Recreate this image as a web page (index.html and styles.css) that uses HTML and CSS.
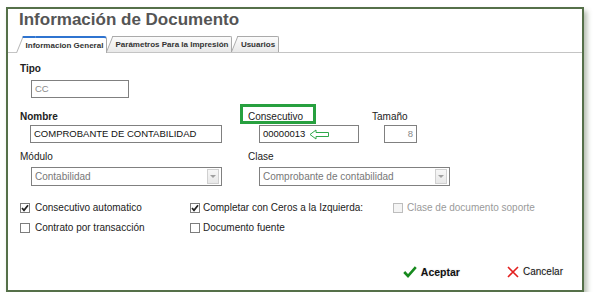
FILE: index.html
```html
<!DOCTYPE html>
<html lang="es">
<head>
  <meta charset="UTF-8">
  <title>Información de Documento</title>
  <link rel="stylesheet" href="styles.css">
</head>
<body>
  <div class="window">
    <h1 class="title">Información de Documento</h1>

    <!-- pestañas -->
    <div class="tabs">
      <div class="tab tab-general active">Informacion General</div>
      <div class="tab tab-print">Parámetros Para la Impresión</div>
      <div class="tab tab-users">Usuarios</div>
    </div>

    <div class="form">
      <div class="lbl bold">Tipo</div>
      <div class="field f-tipo muted">CC</div>

      <div class="row row-main">
        <div class="col col1">
          <div class="lbl bold">Nombre</div>
          <div class="field f-nombre">COMPROBANTE DE CONTABILIDAD</div>
        </div>
        <div class="col col2">
          <div class="lbl marked">Consecutivo</div>
          <div class="field f-consec">00000013
            <svg class="arrow" width="21" height="11" viewBox="0 0 21 11">
              <polygon points="1,5.5 7,1 7,3.5 19.5,3.5 19.5,7.5 7,7.5 7,10" fill="#fff" stroke="#2fa84a" stroke-width="1"/>
            </svg>
          </div>
        </div>
        <div class="col">
          <div class="lbl">Tamaño</div>
          <div class="field f-size muted">8</div>
        </div>
      </div>

      <div class="row row-select">
        <div class="col col1">
          <div class="lbl">Módulo</div>
          <div class="select">
            <span>Contabilidad</span>
            <span class="drop"></span>
          </div>
        </div>
        <div class="col col2">
          <div class="lbl">Clase</div>
          <div class="select">
            <span>Comprobante de contabilidad</span>
            <span class="drop"></span>
          </div>
        </div>
      </div>

      <!-- casillas -->
      <div class="checks">
        <div class="check-row">
          <label class="chk c1"><span class="box on"><svg width="8" height="8" viewBox="0 0 8 8"><polyline points="1,4 3,6.3 7,1.2" fill="none" stroke="#222" stroke-width="1.7"/></svg></span>Consecutivo automatico</label>
          <label class="chk c2"><span class="box on"><svg width="8" height="8" viewBox="0 0 8 8"><polyline points="1,4 3,6.3 7,1.2" fill="none" stroke="#222" stroke-width="1.7"/></svg></span>Completar con Ceros a la Izquierda:</label>
          <label class="chk c3 disabled"><span class="box"></span>Clase de documento soporte</label>
        </div>
        <div class="check-row">
          <label class="chk c1"><span class="box"></span>Contrato por transacción</label>
          <label class="chk c2"><span class="box"></span>Documento fuente</label>
        </div>
      </div>
    </div>

    <div class="actions">
      <span class="btn ok">
        <svg width="14" height="12" viewBox="0 0 14 12"><polyline points="1.2,6 5,10 12.8,1.2" fill="none" stroke="#178a1e" stroke-width="2.6"/></svg>
        Aceptar
      </span>
      <span class="btn cancel">
        <svg width="12" height="12" viewBox="0 0 12 12"><path d="M1 1 L11 11 M11 1 L1 11" stroke="#e3201f" stroke-width="1.6"/></svg>
        Cancelar
      </span>
    </div>
  </div>
</body>
</html>
```

FILE: styles.css
```css
body, html {
  margin: 0;
  padding: 0;
  background: #fff;
  font-family: "Liberation Sans", Arial, sans-serif;
  color: #222;
}
.window {
  margin: 7px 0 0 6px;
  width: 578px;
  height: 285px;
  box-sizing: border-box;
  border: 2px solid #557049;
  background: #fff;
  box-shadow: 3px 4px 5px rgba(90, 110, 80, 0.45);
  display: flex;
  flex-direction: column;
}
.title {
  margin: 0;
  padding-left: 11px;
  font-size: 17px;
  line-height: 22px;
  font-weight: bold;
  color: #555;
}

/* pestañas */
.tabs {
  margin-top: 5px;
  height: 16px;
  padding-left: 15px;
  display: flex;
  align-items: flex-end;
  gap: 6px;
  border-bottom: 1px solid #c4c4c4;
}
.tab {
  position: relative;
  z-index: 0;
  box-sizing: border-box;
  height: 16px;
  line-height: 15px;
  text-align: center;
  font-size: 8px;
  font-weight: bold;
  color: #333;
  border-top: 1px solid #aaa;
  border-right: 1px solid #aaa;
  border-top-right-radius: 2px;
  background: linear-gradient(to bottom, #fbfbfb, #e9e9e9);
}
.tab::before {
  content: '';
  position: absolute;
  z-index: -1;
  top: -1px;
  bottom: 0;
  left: -7px;
  width: 12px;
  background: inherit;
  border-left: 1px solid #aaa;
  border-top: 1px solid #aaa;
  transform: skewX(-22deg);
  transform-origin: bottom left;
}
.tab.active {
  z-index: 1;
  height: 17px;
  margin-bottom: -1px;
  line-height: 16px;
  background: #fff;
  border-top: 2px solid #2f74d0;
  border-top-right-radius: 3px;
}
.tab.active::before {
  top: -2px;
  border-top: 2px solid #2f74d0;
  border-left-color: #b5b5b5;
}
.tab-general { width: 84px; }
.tab-print { width: 119px; }
.tab-users { width: 41px; }

/* formulario */
.form {
  padding: 9px 0 0 12px;
}
.lbl {
  font-size: 10px;
  line-height: 14px;
  height: 14px;
  color: #222;
}
.lbl.bold { font-weight: bold; }
.lbl.marked {
  position: relative;
}
.lbl.marked::after {
  content: '';
  position: absolute;
  top: -6px;
  left: -8px;
  width: 76px;
  height: 20px;
  box-sizing: border-box;
  border: 3px solid #27a03f;
}
.field {
  box-sizing: border-box;
  height: 18px;
  margin-left: 11px;
  padding: 0 3px;
  border: 1px solid #808080;
  font-size: 9.5px;
  line-height: 16px;
  color: #111;
  white-space: nowrap;
  display: flex;
  align-items: center;
}
.field.muted { color: #888; }
.f-tipo { width: 98px; margin-top: 4px; }
.f-nombre { width: 192px; margin-left: 10px; }
.f-consec { width: 100px; gap: 4px; }
.f-size { width: 33px; margin-left: 12px; justify-content: flex-end; }
.arrow { display: block; }

.row {
  display: flex;
}
.col1 { width: 228px; }
.col2 { width: 124px; }
.row-main { margin-top: 12px; }
.row-main .field { margin-top: 1px; }
.row-select { margin-top: 7px; }

.select {
  box-sizing: border-box;
  width: 191px;
  height: 19px;
  margin: 3px 0 0 11px;
  padding: 0 2px 0 3px;
  border: 1px solid #808080;
  font-size: 10px;
  color: #777;
  display: flex;
  align-items: center;
  justify-content: space-between;
}
.drop {
  position: relative;
  box-sizing: border-box;
  width: 12px;
  height: 15px;
  border: 1px solid #d0d0d0;
  background: linear-gradient(to bottom, #f7f7f7, #e8e8e8);
}
.drop::after {
  content: '';
  position: absolute;
  left: 2px;
  top: 5px;
  border-left: 3px solid transparent;
  border-right: 3px solid transparent;
  border-top: 3px solid #a0a0a0;
}

/* casillas */
.checks {
  margin-top: 15px;
  display: flex;
  flex-direction: column;
  gap: 6px;
}
.check-row {
  display: flex;
}
.chk {
  display: flex;
  align-items: center;
  font-size: 10px;
  line-height: 14px;
  color: #222;
  white-space: nowrap;
}
.chk.c1 { width: 170px; gap: 5px; }
.chk.c2 { width: 203px; gap: 3px; }
.chk.c3 { gap: 4px; }
.chk.disabled { color: #9a9a9a; }
.box {
  box-sizing: border-box;
  width: 10px;
  height: 10px;
  border: 1px solid #7d7d7d;
  background: #fff;
  display: flex;
  align-items: center;
  justify-content: center;
}
.chk.disabled .box {
  border-color: #bdbdbd;
  background: #f4f4f4;
}

/* botones */
.actions {
  margin-top: auto;
  padding: 0 19px 11px 0;
  display: flex;
  justify-content: flex-end;
  gap: 47px;
}
.btn {
  display: flex;
  align-items: center;
  gap: 4px;
  font-size: 10.5px;
  line-height: 14px;
  color: #111;
  text-shadow: 0 0 2px #d8d8d8;
}
.btn.ok { font-weight: bold; }
.btn.cancel { font-size: 10px; }
```
